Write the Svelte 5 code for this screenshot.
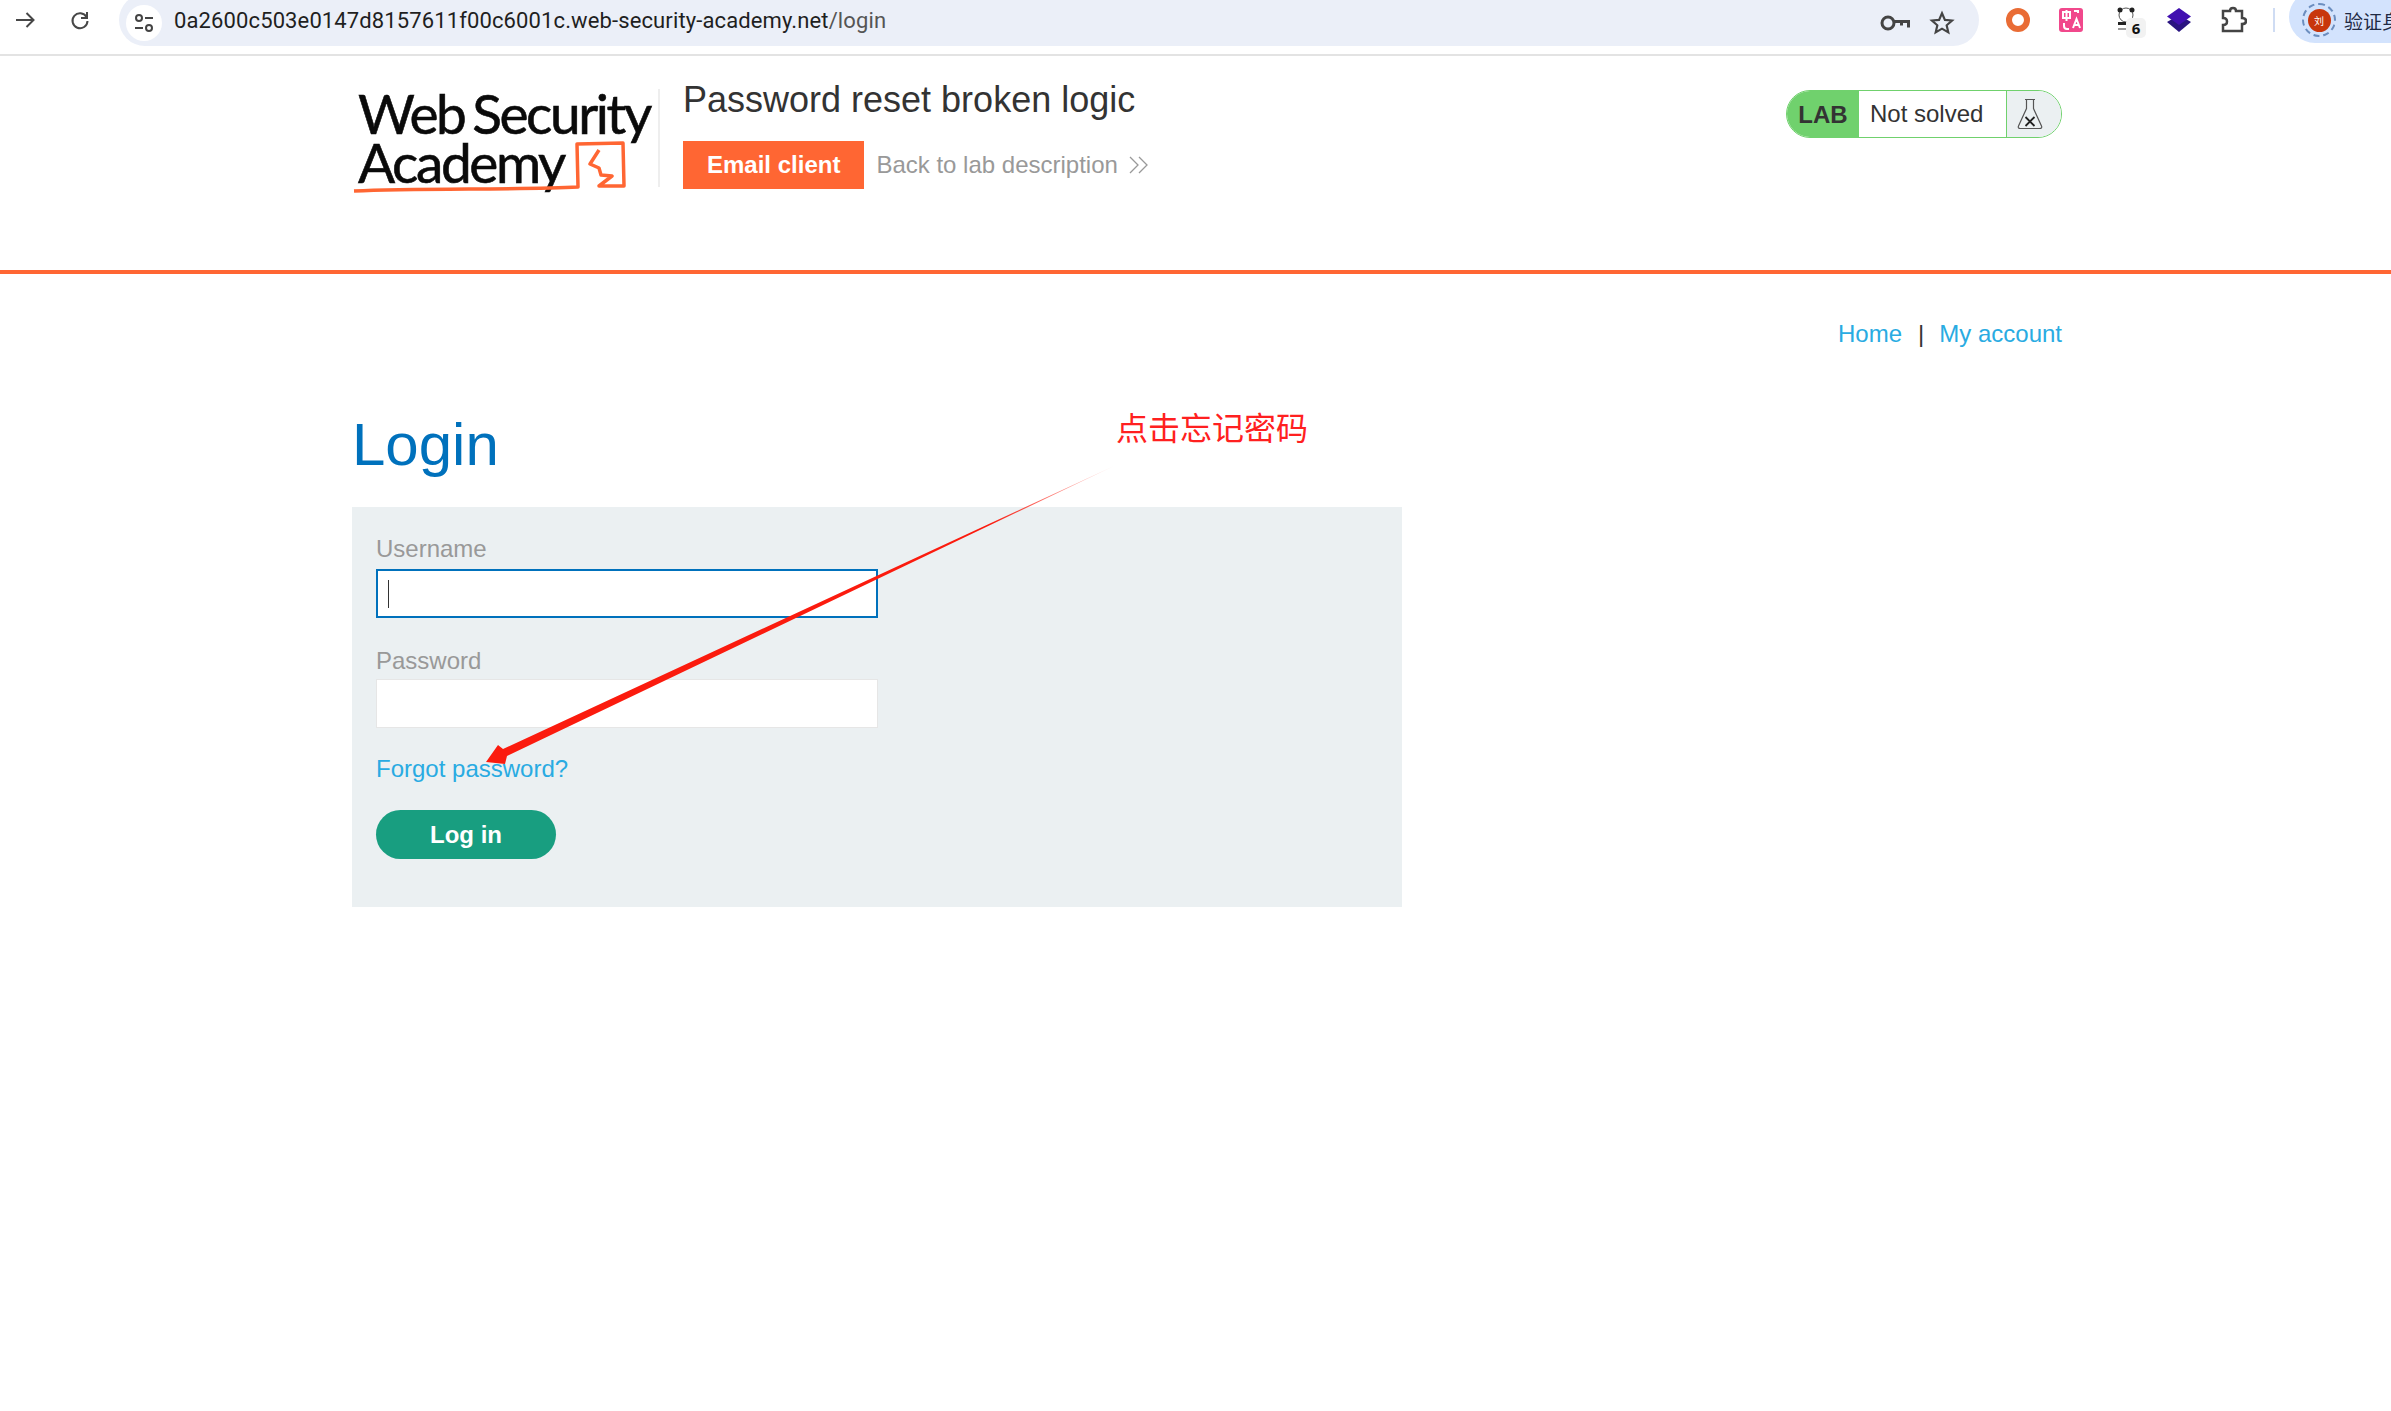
<script>
  const url = '0a2600c503e0147d8157611f00c6001c.web-security-academy.net';
</script>

<div class="page">
  <div class="chrome">
    <svg class="nav-icon first" width="24" height="24" viewBox="0 0 24 24" fill="none" stroke="#474747" stroke-width="2"><path d="M3 12h17M13.500 5l7 7-7 7" /></svg>
    <svg class="nav-icon" width="24" height="24" viewBox="0 0 24 24" fill="none" stroke="#474747" stroke-width="2"><path d="M18.5 9A7.5 7.5 0 1 0 19.5 13" /><path d="M19 4v6h-6" /></svg>
    <div class="omnibox">
      <span class="tune">
        <svg width="22" height="22" viewBox="0 0 22 22" fill="none" stroke="#444" stroke-width="2"><circle cx="6" cy="6" r="3" /><path d="M12 6h8M2 16h8" /><circle cx="16" cy="16" r="3" /></svg>
      </span>
      <span class="url">{url}<span class="path">/login</span></span>
      <svg class="key" width="30" height="22" viewBox="0 0 30 22" fill="none" stroke="#444" stroke-width="3"><circle cx="8" cy="11" r="6" /><path d="M14 9.500h14.500v6M21.500 9.500v4" /></svg>
      <svg class="star" width="26" height="26" viewBox="0 0 24 24" fill="none" stroke="#444" stroke-width="2"><path d="M12 3l2.7 6.1 6.6.6-5 4.4 1.5 6.5L12 17.2l-5.8 3.4 1.5-6.5-5-4.4 6.6-.6z" /></svg>
    </div>
    <div class="tray">
      <span class="ring"></span>
      <span class="translate">
        <svg width="24" height="24" viewBox="0 0 24 24" fill="none" stroke="#fff" stroke-width="2"><path d="M4 4h7v6H4zM7.5 2v11M15 3h4v2M5 15v3q0 3 3 3h2M14 20l3.5-9 3.5 9M15.500 17h4" /></svg>
      </span>
      <span class="panda">
        <svg width="18" height="26" viewBox="0 0 18 26"><circle cx="9" cy="8" r="7" fill="#fff" stroke="#555" /><circle cx="3" cy="3" r="2.500" fill="#222" /><circle cx="15" cy="3" r="2.500" fill="#222" /><rect x="1" y="15" width="8" height="3" fill="#222" /><rect x="1" y="21" width="12" height="2" fill="#999" /></svg>
        <span class="count">6</span>
      </span>
      <svg class="layers" width="26" height="26" viewBox="0 0 26 26"><path d="M13 8L25 15 13 25 1 15z" fill="#2a1480" /><path d="M13 1L25 9.500 13 18 1 9.500z" fill="#4110b0" /></svg>
      <svg class="puzzle" width="26" height="28" viewBox="0 0 26 28" fill="none" stroke="#444" stroke-width="2.500"><path d="M2 5h7q0-3 3-3t3 3h6v7q4 0 4 3t-4 3v7H2v-6q4 0 4-3.500T2 12z" /></svg>
      <span class="divider"></span>
      <div class="profile">
        <span class="avatar"><span>刘</span></span>
        <span class="profile-name">验证身份</span>
      </div>
    </div>
  </div>

  <header class="lab-header">
    <div class="logo">
      <div class="logo-line top">Web Security</div>
      <div class="logo-line">Academy</div>
      <svg class="logo-mark" width="306" height="115" viewBox="352 85 306 115" fill="none" stroke="#ff6633" stroke-width="3.500" stroke-linejoin="round">
        <path d="M354 191C420 188 520 190 578 187L577 144 623 143 624 186 599 186 612 176 601 175 599 168 590 164 599 150" />
      </svg>
    </div>
    <div class="lab-title">
      <h2>Password reset broken logic</h2>
      <div class="lab-links">
        <a class="email-btn" href="#email">Email client</a>
        <a class="back-link" href="#back">Back to lab description
          <svg width="20" height="20" viewBox="0 0 20 20" fill="none" stroke="#999" stroke-width="1.300"><path d="M1 2l8 8-8 8M10 2l8 8-8 8" /></svg>
        </a>
      </div>
    </div>
    <div class="lab-status">
      <span class="lab-tag">LAB</span>
      <span class="lab-state">Not solved</span>
      <span class="lab-icon">
        <svg width="26" height="32" viewBox="0 0 26 32" fill="none" stroke="#555" stroke-width="1.200"><path d="M8 1.500h10M9.500 1.500v9L1.500 28q-1 2.500 2 2.500h19q3 0 2-2.500l-8-17.500v-9" /><path d="M8.500 19l9 9M17.500 19l-9 9" stroke="#222" stroke-width="1.800" /></svg>
      </span>
    </div>
  </header>

  <main>
    <nav class="top-links">
      <a href="#home">Home</a><span class="sep">|</span><a href="#account">My account</a>
    </nav>
    <h1>Login</h1>
    <section class="login-panel">
      <div class="label">Username</div>
      <div class="input focused"><span class="caret"></span></div>
      <div class="label second">Password</div>
      <div class="input"></div>
      <a class="forgot" href="#forgot">Forgot password?</a>
      <button type="button">Log in</button>
    </section>
  </main>

  <div class="note">点击忘记密码</div>
  <svg class="arrow" width="2391" height="1411" viewBox="0 0 2391 1411">
    <defs>
      <linearGradient id="fade" gradientUnits="userSpaceOnUse" x1="486" y1="762" x2="1114" y2="466">
        <stop offset="0" stop-color="#fb1b0e" />
        <stop offset="0.8" stop-color="#fb1b0e" />
        <stop offset="1" stop-color="#fb1b0e" stop-opacity="0.15" />
      </linearGradient>
    </defs>
    <path d="M486 762L498 745 503 749 1114 466 507 756 505 764z" fill="url(#fade)" />
  </svg>
</div>

<style>
  :global(body) {
    margin: 0;
    background: #fff;
  }

  .page {
    position: relative;
    width: 2391px;
    height: 1411px;
    overflow: hidden;
    font-family: "Liberation Sans", Arial, sans-serif;
    font-size: 24px;
    color: #333;
  }

  a {
    text-decoration: none;
  }

  .chrome {
    display: flex;
    height: 54px;
    border-bottom: 2px solid #e3e3e3;
    align-items: flex-start;
    box-sizing: content-box;
  }

  .nav-icon {
    margin-top: 8px;
    margin-left: 31px;
    flex: none;
  }

  .nav-icon.first {
    margin-left: 13px;
  }

  .omnibox {
    display: flex;
    align-items: center;
    margin-top: -6px;
    margin-left: 27px;
    width: 1860px;
    height: 52px;
    border-radius: 26px;
    background: #ebeff8;
    flex: none;
    box-sizing: border-box;
  }

  .tune {
    display: flex;
    align-items: center;
    justify-content: center;
    width: 36px;
    height: 36px;
    margin: 6px 0 0 7px;
    border-radius: 50%;
    background: #fff;
  }

  .url {
    margin: 0 0 0 12px;
    font-family: Roboto, sans-serif;
    font-size: 22px;
    letter-spacing: 0.12px;
    color: #1f1f1f;
    flex: 1;
  }

  .path {
    color: #555;
  }

  .key {
    margin: 6px 0 0 0;
  }

  .star {
    margin: 6px 24px 0 19px;
  }

  .tray {
    display: flex;
    align-items: center;
    height: 40px;
    flex: none;
  }

  .ring {
    width: 24px;
    height: 24px;
    margin-left: 27px;
    border: 6px solid #e96c35;
    border-radius: 50%;
    box-sizing: border-box;
  }

  .translate {
    display: flex;
    align-items: center;
    justify-content: center;
    width: 24px;
    height: 24px;
    margin-left: 29px;
    border-radius: 3px;
    background: #f1488c;
  }

  .panda {
    position: relative;
    display: flex;
    width: 18px;
    margin-left: 34px;
  }

  .count {
    position: absolute;
    left: 9px;
    top: 11px;
    width: 20px;
    height: 20px;
    border-radius: 5px;
    background: #f2f2f2;
    font-family: "Open Sans", sans-serif;
    font-size: 15px;
    font-weight: 700;
    line-height: 20px;
    text-align: center;
    color: #111;
  }

  .layers {
    margin-left: 31px;
  }

  .puzzle {
    margin-left: 29px;
  }

  .divider {
    width: 2px;
    height: 24px;
    margin-left: 26px;
    background: #cfdcf3;
  }

  .profile {
    display: flex;
    align-items: center;
    margin: -6px 0 0 14px;
    width: 160px;
    height: 52px;
    border-radius: 26px;
    background: #d3e3fd;
    overflow: hidden;
    flex: none;
  }

  .avatar {
    display: flex;
    align-items: center;
    justify-content: center;
    width: 30px;
    height: 30px;
    margin: 6px 0 0 13px;
    border: 2px dashed #6c8ebf;
    border-radius: 50%;
    flex: none;
  }

  .avatar span {
    display: block;
    width: 23px;
    height: 23px;
    border-radius: 50%;
    background: #c8360c;
    color: #fff;
    font-family: "Noto Sans CJK SC", sans-serif;
    font-size: 10px;
    line-height: 23px;
    text-align: center;
  }

  .profile-name {
    margin: 6px 0 0 8px;
    font-family: "Noto Sans CJK SC", sans-serif;
    font-size: 19px;
    white-space: nowrap;
    color: #1f2a44;
  }

  .lab-header {
    display: flex;
    align-items: flex-start;
    height: 214px;
    padding: 0 329px 0 352px;
    border-bottom: 4px solid #ff6633;
    box-sizing: content-box;
  }

  .logo {
    position: relative;
    width: 306px;
    height: 98px;
    margin-top: 33px;
    border-right: 2px solid #eee;
    box-sizing: content-box;
    flex: none;
  }

  .logo-line {
    height: 48px;
    padding-left: 6px;
    font-family: Lato, sans-serif;
    font-size: 55px;
    line-height: 48px;
    letter-spacing: -2.4px;
    word-spacing: -4px;
    white-space: nowrap;
    color: #0a0a0a;
    -webkit-text-stroke: 0.6px #0a0a0a;
  }

  .logo-line.top {
    height: 49px;
  }

  .logo-mark {
    position: absolute;
    left: 0;
    top: -4px;
  }

  .lab-title {
    margin-left: 23px;
    flex: 1;
  }

  h2 {
    margin: 21px 0 0;
    font-size: 36px;
    font-weight: 400;
    line-height: 46px;
    color: #333;
  }

  .lab-links {
    display: flex;
    align-items: center;
    margin-top: 18px;
  }

  .email-btn {
    display: block;
    height: 48px;
    padding: 0 24px;
    background: #ff6633;
    color: #fff;
    font-weight: 700;
    line-height: 48px;
  }

  .back-link {
    display: flex;
    align-items: center;
    gap: 11px;
    margin-left: 12px;
    color: #999;
  }

  .lab-status {
    display: flex;
    align-items: stretch;
    width: 276px;
    height: 48px;
    margin-top: 34px;
    border: 1.5px solid #70d16d;
    border-radius: 24px;
    overflow: hidden;
    box-sizing: border-box;
    flex: none;
  }

  .lab-tag {
    width: 72px;
    background: #70d16d;
    font-weight: 700;
    line-height: 47px;
    text-align: center;
    color: #333;
    flex: none;
  }

  .lab-state {
    padding-left: 11px;
    line-height: 46px;
    flex: 1;
  }

  .lab-icon {
    display: flex;
    align-items: center;
    justify-content: center;
    width: 55px;
    padding-right: 9px;
    border-left: 1.5px solid #70d16d;
    background: #ebf0f2;
    box-sizing: border-box;
    flex: none;
  }

  main {
    padding: 0 329px 0 352px;
  }

  .top-links {
    display: flex;
    justify-content: flex-end;
    padding-top: 46px;
    line-height: 28px;
  }

  .top-links a,
  .forgot {
    color: #29abe2;
  }

  .sep {
    margin: 0 15px 0 16px;
  }

  h1 {
    margin: 57px 0 0;
    font-size: 60px;
    font-weight: 400;
    line-height: 80px;
    color: #0071bc;
  }

  .login-panel {
    display: flex;
    flex-direction: column;
    align-items: flex-start;
    width: 1050px;
    height: 400px;
    margin-top: 22px;
    padding: 28px 24px 0;
    background: #ebf0f2;
    box-sizing: border-box;
  }

  .label {
    height: 28px;
    margin-bottom: 6px;
    line-height: 28px;
    color: #999;
  }

  .label.second {
    margin-top: 29px;
    margin-bottom: 4px;
  }

  .input {
    display: flex;
    align-items: center;
    width: 502px;
    height: 49px;
    padding-left: 10px;
    border: 1px solid #e6e6e6;
    background: #fff;
    box-sizing: border-box;
  }

  .input.focused {
    border: 2px solid #0071bc;
  }

  .caret {
    width: 1px;
    height: 28px;
    background: #333;
  }

  .forgot {
    margin-top: 27px;
    line-height: 28px;
  }

  button {
    width: 180px;
    height: 49px;
    margin-top: 27px;
    padding: 0;
    border: 0;
    border-radius: 25px;
    background: #189e80;
    color: #fff;
    font-family: inherit;
    font-size: 24px;
    font-weight: 700;
  }

  .note {
    position: absolute;
    left: 1116px;
    top: 403px;
    font-family: "Noto Sans CJK SC", sans-serif;
    font-size: 32px;
    line-height: 46px;
    color: #ff2020;
  }

  .arrow {
    position: absolute;
    left: 0;
    top: 0;
    pointer-events: none;
  }
</style>
